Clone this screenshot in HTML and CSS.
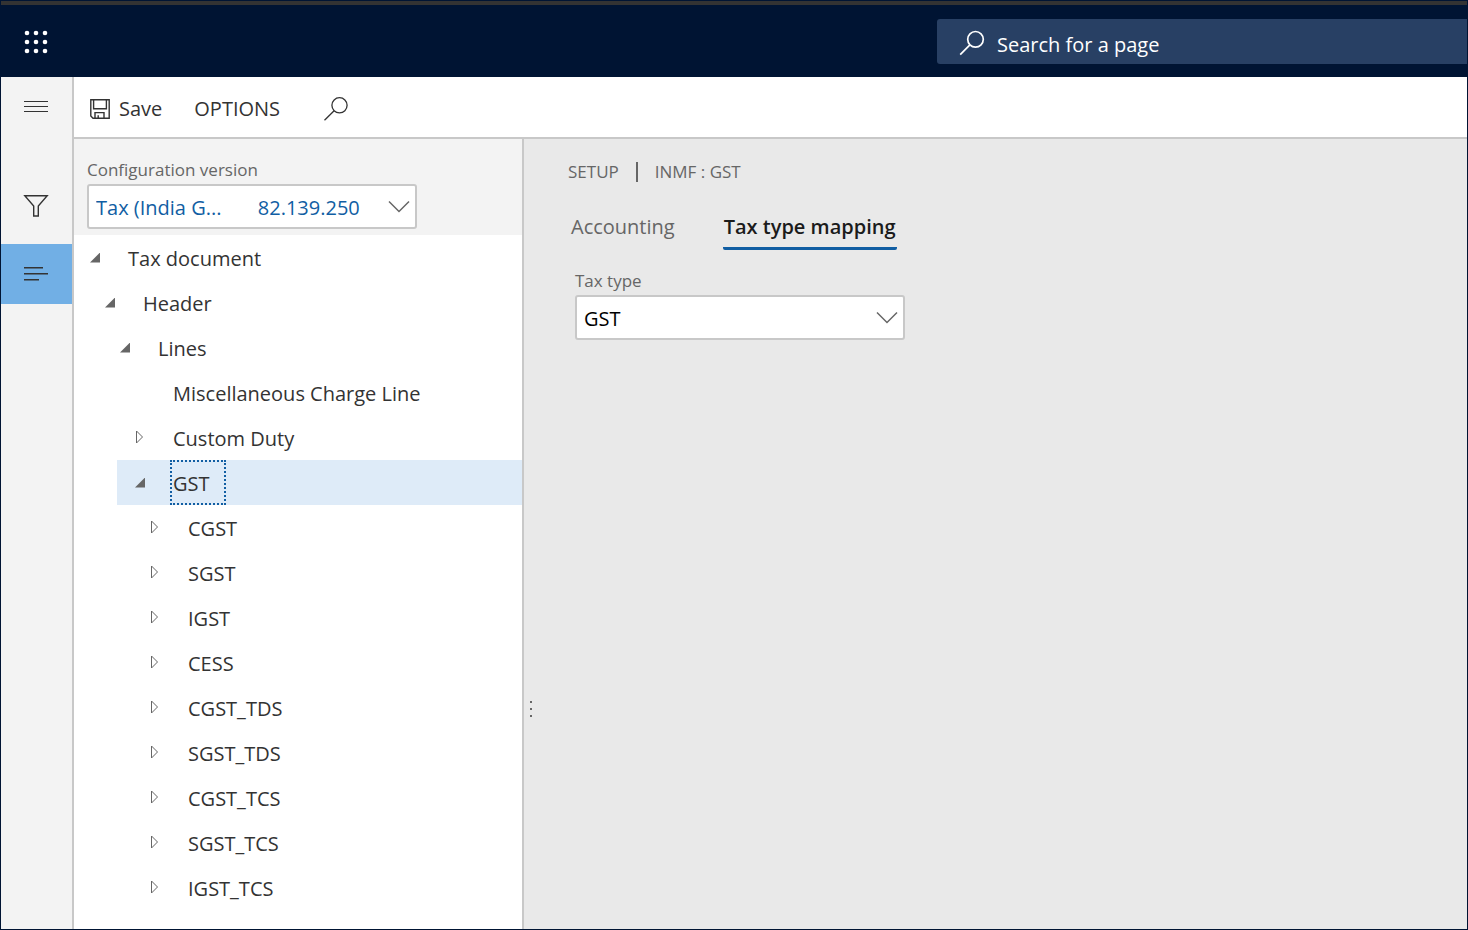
FILE: index.html
```html
<!DOCTYPE html>
<html lang="en">
<head>
<meta charset="utf-8">
<meta name="viewport" content="width=device-width, initial-scale=1">
<title>Tax setup</title>
<link rel="stylesheet" href="styles.css">
</head>
<body>
<div class="app">
  <header class="topbar">
    <button class="launcher" type="button" aria-label="App launcher">
      <svg width="24" height="24" viewBox="0 0 24 24" fill="#fff">
        <circle cx="3" cy="3" r="2.3"/><circle cx="12" cy="3" r="2.3"/><circle cx="21" cy="3" r="2.3"/>
        <circle cx="3" cy="12" r="2.3"/><circle cx="12" cy="12" r="2.3"/><circle cx="21" cy="12" r="2.3"/>
        <circle cx="3" cy="21" r="2.3"/><circle cx="12" cy="21" r="2.3"/><circle cx="21" cy="21" r="2.3"/>
      </svg>
    </button>
    <label class="search">
      <svg width="26" height="26" viewBox="0 0 26 26" fill="none" stroke="#fff" stroke-width="1.7"><circle cx="16.5" cy="9.3" r="7.8"/><path d="M10.9 14.9 1.2 24.6"/></svg>
      <input class="search-input" type="text" placeholder="Search for a page" aria-label="Search for a page">
    </label>
  </header>
  <div class="body">
    <nav class="rail" aria-label="Navigation">
      <button class="rail-button" type="button" aria-label="Expand navigation">
        <svg width="24" height="14" viewBox="0 0 24 14" stroke="#333" stroke-width="1.1"><path d="M0 1.5h24M0 6.5h24M0 11.5h24"/></svg>
      </button>
      <button class="rail-button rail-filter" type="button" aria-label="Filter">
        <svg width="26" height="24" viewBox="0 0 26 24" fill="none" stroke="#333" stroke-width="1.4"><path d="M1.8 1.8h22.4L15.3 12v10h-4.6V12z"/></svg>
      </button>
      <button class="rail-button rail-active" type="button" aria-label="Show list">
        <svg width="24" height="14" viewBox="0 0 24 14" stroke="#333" stroke-width="1.4"><path d="M0 .8h19M0 6.8h24M0 12.8h15"/></svg>
      </button>
    </nav>
    <div class="workspace">
      <div class="actions">
        <button class="action save" type="button">
          <svg width="20" height="20" viewBox="0 0 20 20" fill="none" stroke="#333" stroke-width="1.4"><path d="M.8.8h18.4v18.4H3L.8 17z"/><path d="M3.6.8v9h12.8v-9M5 19v-5.4h9V19M8.2 19v-2.8"/></svg>
          Save
        </button>
        <button class="action options" type="button">OPTIONS</button>
        <button class="action" type="button" aria-label="Search actions">
          <svg width="26" height="26" viewBox="0 0 26 26" fill="none" stroke="#333" stroke-width="1.3"><circle cx="16.5" cy="9.3" r="7.6"/><path d="M11.1 14.7 1.5 24.3"/></svg>
        </button>
      </div>
      <div class="panes">
        <aside class="side">
          <div class="version">
            <label class="field-label" for="version">Configuration version</label>
            <div class="field">
              <select id="version" class="select select-link">
                <option>Tax (India G...&nbsp;&nbsp;&nbsp;&nbsp;&nbsp;&nbsp;&nbsp;82.139.250</option>
              </select>
              <svg class="chevron" width="22" height="14" viewBox="0 0 22 14" fill="none" stroke="#666" stroke-width="1.5"><path d="M1 1.5l10 10 10-10"/></svg>
            </div>
          </div>
          <ul class="tree" role="tree">
            <li><div class="row"><i class="caret open"></i><button class="node" type="button">Tax document</button></div>
              <ul>
                <li><div class="row"><i class="caret open"></i><button class="node" type="button">Header</button></div>
                  <ul>
                    <li><div class="row"><i class="caret open"></i><button class="node" type="button">Lines</button></div>
                      <ul>
                        <li><div class="row"><i class="caret"></i><button class="node" type="button">Miscellaneous Charge Line</button></div></li>
                        <li><div class="row"><svg class="caret" viewBox="0 0 10 16"><path d="M1.5 1v12L7.5 7z"/></svg><button class="node" type="button">Custom Duty</button></div></li>
                        <li><div class="row selected"><i class="caret open"></i><button class="node" type="button">GST</button></div>
                          <ul>
                            <li><div class="row"><svg class="caret" viewBox="0 0 10 16"><path d="M1.5 1v12L7.5 7z"/></svg><button class="node" type="button">CGST</button></div></li>
                            <li><div class="row"><svg class="caret" viewBox="0 0 10 16"><path d="M1.5 1v12L7.5 7z"/></svg><button class="node" type="button">SGST</button></div></li>
                            <li><div class="row"><svg class="caret" viewBox="0 0 10 16"><path d="M1.5 1v12L7.5 7z"/></svg><button class="node" type="button">IGST</button></div></li>
                            <li><div class="row"><svg class="caret" viewBox="0 0 10 16"><path d="M1.5 1v12L7.5 7z"/></svg><button class="node" type="button">CESS</button></div></li>
                            <li><div class="row"><svg class="caret" viewBox="0 0 10 16"><path d="M1.5 1v12L7.5 7z"/></svg><button class="node" type="button">CGST_TDS</button></div></li>
                            <li><div class="row"><svg class="caret" viewBox="0 0 10 16"><path d="M1.5 1v12L7.5 7z"/></svg><button class="node" type="button">SGST_TDS</button></div></li>
                            <li><div class="row"><svg class="caret" viewBox="0 0 10 16"><path d="M1.5 1v12L7.5 7z"/></svg><button class="node" type="button">CGST_TCS</button></div></li>
                            <li><div class="row"><svg class="caret" viewBox="0 0 10 16"><path d="M1.5 1v12L7.5 7z"/></svg><button class="node" type="button">SGST_TCS</button></div></li>
                            <li><div class="row"><svg class="caret" viewBox="0 0 10 16"><path d="M1.5 1v12L7.5 7z"/></svg><button class="node" type="button">IGST_TCS</button></div></li>
                          </ul>
                        </li>
                      </ul>
                    </li>
                  </ul>
                </li>
              </ul>
            </li>
          </ul>
        </aside>
        <div class="splitter" role="separator" aria-orientation="vertical">
          <svg width="4" height="16" viewBox="0 0 4 16" fill="#666"><path d="M1 0h2v2H1zM1 7h2v2H1zM1 14h2v2H1z"/></svg>
        </div>
        <main class="content">
          <div class="crumbs"><span>SETUP</span><i class="crumb-bar"></i><span>INMF : GST</span></div>
          <div class="tabs" role="tablist">
            <button class="tab" type="button" role="tab" aria-selected="false">Accounting</button>
            <button class="tab tab-active" type="button" role="tab" aria-selected="true">Tax type mapping</button>
          </div>
          <div class="tab-panel">
            <label class="field-label" for="taxtype">Tax type</label>
            <div class="field">
              <select id="taxtype" class="select"><option>GST</option></select>
              <svg class="chevron" width="22" height="14" viewBox="0 0 22 14" fill="none" stroke="#666" stroke-width="1.5"><path d="M1 1.5l10 10 10-10"/></svg>
            </div>
          </div>
        </main>
      </div>
    </div>
  </div>
</div>
</body>
</html>
```
FILE: styles.css
```css
* { box-sizing: border-box; }
body {
  margin: 0;
  color: #333;
  font: 20px/28px "Open Sans", "Noto Sans", sans-serif;
}
button, input, select {
  margin: 0;
  padding: 0;
  border: 0;
  background: none;
  color: inherit;
  font: inherit;
}
svg { display: block; flex: none; }
ul { margin: 0; padding: 0; list-style: none; }

.app {
  display: flex;
  flex-direction: column;
  min-height: 100vh;
  border: 1px solid #001433;
}
.topbar {
  display: flex;
  align-items: center;
  justify-content: space-between;
  height: 76px;
  border-top: 4px solid #333;
  background: #001433;
}
.launcher { display: flex; justify-content: center; width: 70px; padding-top: 2px; }
.search {
  display: flex;
  align-items: center;
  gap: 12px;
  width: 530px;
  height: 45px;
  padding: 4px 0 0 22px;
  border-radius: 3px 0 0 3px;
  background: #284064;
}
.search-input { flex: 1; min-width: 0; padding-top: 3px; color: #fff; }
.search-input::placeholder { color: #fff; opacity: 1; }

.body { display: flex; flex: 1; }
.rail { width: 71px; background: #f3f3f3; }
.rail-button {
  display: flex;
  align-items: center;
  justify-content: center;
  width: 100%;
  height: 60px;
  padding-right: 2px;
}
.rail-filter { margin: 39px 0 8px; }
.rail-active { background: #71afe5; }

.workspace {
  display: flex;
  flex: 1;
  flex-direction: column;
  min-width: 0;
  border-left: 2px solid #c8c8c8;
}
.actions {
  display: flex;
  align-items: center;
  height: 62px;
  padding: 3px 0 0 16px;
  border-bottom: 2px solid #c8c8c8;
  background: #fff;
}
.action { display: flex; align-items: center; gap: 9px; }
.options { margin: 0 43px 0 32px; }

.panes { display: flex; flex: 1; }
.side { width: 448px; background: #fff; }
.version { height: 96px; padding: 18px 13px 0; background: #f3f3f3; }
.field-label {
  display: block;
  color: #666;
  font-size: 17px;
  line-height: 26px;
}
.field { display: grid; width: 330px; margin-top: 1px; }
.select {
  grid-area: 1 / 1;
  width: 100%;
  height: 45px;
  padding: 2px 40px 0 7px;
  border: 2px solid #c8c8c8;
  border-radius: 3px;
  background: #fff;
  color: #000;
  appearance: none;
}
.select-link { color: #115ea3; }
.chevron {
  grid-area: 1 / 1;
  align-self: center;
  justify-self: end;
  margin-right: 7px;
  pointer-events: none;
}

.tree { margin-left: -2px; }
.tree ul { padding-left: 15px; }
.row {
  display: flex;
  align-items: center;
  height: 45px;
  padding-left: 18px;
}
.selected { background: #deebf8; }
.caret {
  width: 10px;
  height: 16px;
  margin-right: 25px;
  fill: none;
  stroke: #666;
}
.open {
  height: 10px;
  background: #666;
  clip-path: polygon(100% 0, 100% 100%, 0 100%);
}
.node {
  height: 45px;
  padding: 3px 14px 0 1px;
  border: 2px solid transparent;
  text-align: left;
}
.selected .node { border: 2px dotted #115ea3; }

.splitter {
  display: flex;
  justify-content: center;
  width: 16px;
  padding-top: 562px;
  border-left: 2px solid #c8c8c8;
  background: #e9e9e9;
}
.content { flex: 1; padding: 19px 32px; background: #e9e9e9; }
.crumbs {
  display: flex;
  align-items: center;
  gap: 17px;
  height: 28px;
  margin-left: -2px;
  color: #666;
  font-size: 17px;
}
.crumb-bar { width: 2px; height: 20px; background: #666; }
.tabs { display: flex; gap: 47px; margin-top: 23px; }
.tab {
  height: 41px;
  padding: 0 1px 3px;
  border-bottom: 3px solid transparent;
  color: #666;
}
.tab-active {
  border-bottom-color: #115ea3;
  border-radius: 2px;
  color: #1b1b1b;
  font-weight: 600;
}
.tab-panel { padding: 18px 0 0 5px; }
```
